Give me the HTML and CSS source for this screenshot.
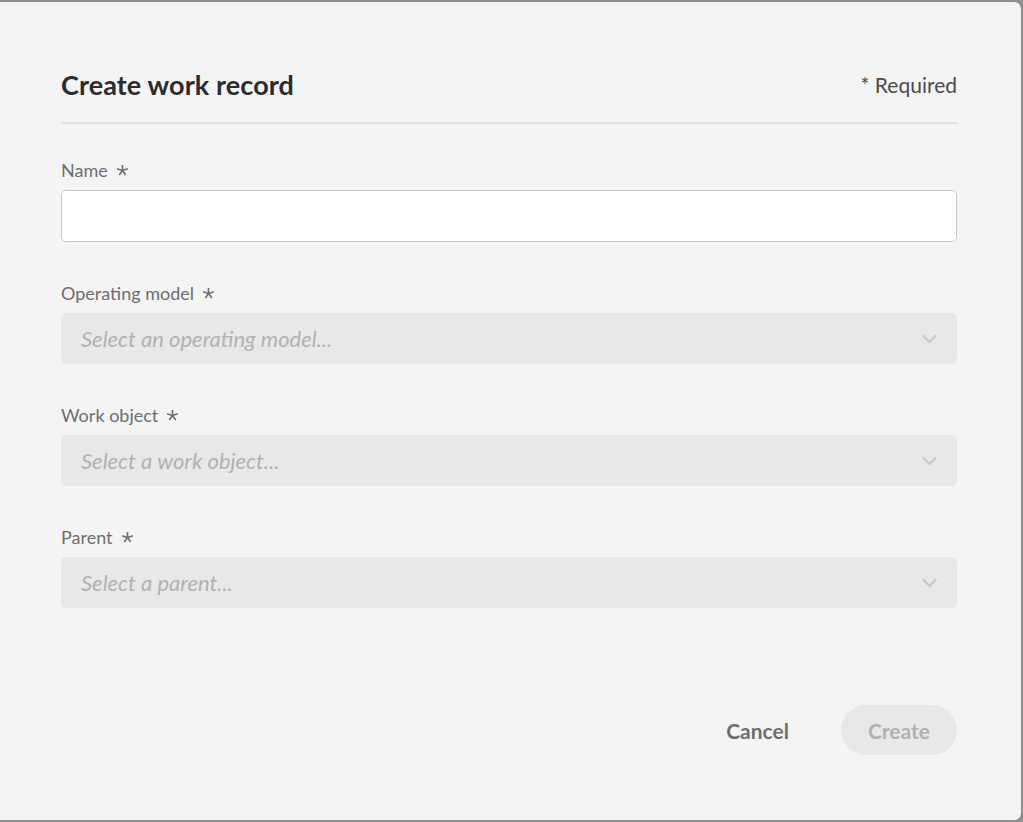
FILE: index.html
```html
<!DOCTYPE html>
<html lang="en">
<head>
<meta charset="utf-8">
<title>Create work record</title>
<link rel="stylesheet" href="styles.css">
</head>
<body>
<div class="dialog">
  <header class="header">
    <h1 class="title">Create work record</h1>
    <span class="required-note">* Required</span>
  </header>
  <div class="divider"></div>
  <form class="form">
    <div class="field">
      <label class="label">Name <svg class="ast" viewBox="0 0 10 10"><g stroke="currentColor" stroke-width="1.5" stroke-linecap="round"><line x1="5" y1="5" x2="5" y2="0.5"/><line x1="5" y1="5" x2="9.3" y2="3.6"/><line x1="5" y1="5" x2="0.7" y2="3.6"/><line x1="5" y1="5" x2="7.6" y2="8.6"/><line x1="5" y1="5" x2="2.4" y2="8.6"/></g></svg></label>
      <div class="textfield"></div>
    </div>
    <div class="field">
      <label class="label">Operating model <svg class="ast" viewBox="0 0 10 10"><g stroke="currentColor" stroke-width="1.5" stroke-linecap="round"><line x1="5" y1="5" x2="5" y2="0.5"/><line x1="5" y1="5" x2="9.3" y2="3.6"/><line x1="5" y1="5" x2="0.7" y2="3.6"/><line x1="5" y1="5" x2="7.6" y2="8.6"/><line x1="5" y1="5" x2="2.4" y2="8.6"/></g></svg></label>
      <div class="picker"><span class="placeholder">Select an operating model...</span><svg class="chev" viewBox="0 0 16 10"><path d="M2 2 L8 8 L14 2" fill="none" stroke="currentColor" stroke-width="2.4" stroke-linecap="round" stroke-linejoin="round"/></svg></div>
    </div>
    <div class="field">
      <label class="label">Work object <svg class="ast" viewBox="0 0 10 10"><g stroke="currentColor" stroke-width="1.5" stroke-linecap="round"><line x1="5" y1="5" x2="5" y2="0.5"/><line x1="5" y1="5" x2="9.3" y2="3.6"/><line x1="5" y1="5" x2="0.7" y2="3.6"/><line x1="5" y1="5" x2="7.6" y2="8.6"/><line x1="5" y1="5" x2="2.4" y2="8.6"/></g></svg></label>
      <div class="picker"><span class="placeholder">Select a work object...</span><svg class="chev" viewBox="0 0 16 10"><path d="M2 2 L8 8 L14 2" fill="none" stroke="currentColor" stroke-width="2.4" stroke-linecap="round" stroke-linejoin="round"/></svg></div>
    </div>
    <div class="field">
      <label class="label">Parent <svg class="ast" viewBox="0 0 10 10"><g stroke="currentColor" stroke-width="1.5" stroke-linecap="round"><line x1="5" y1="5" x2="5" y2="0.5"/><line x1="5" y1="5" x2="9.3" y2="3.6"/><line x1="5" y1="5" x2="0.7" y2="3.6"/><line x1="5" y1="5" x2="7.6" y2="8.6"/><line x1="5" y1="5" x2="2.4" y2="8.6"/></g></svg></label>
      <div class="picker"><span class="placeholder">Select a parent...</span><svg class="chev" viewBox="0 0 16 10"><path d="M2 2 L8 8 L14 2" fill="none" stroke="currentColor" stroke-width="2.4" stroke-linecap="round" stroke-linejoin="round"/></svg></div>
    </div>
  </form>
  <footer class="footer">
    <button class="btn btn-cancel" type="button">Cancel</button>
    <button class="btn btn-create" type="button" disabled>Create</button>
  </footer>
</div>
</body>
</html>
```
FILE: styles.css
```css
html, body {
  margin: 0;
  padding: 0;
  height: 100%;
}
body {
  background: #8f8f8f;
  font-family: Lato, "Open Sans", "Noto Sans", sans-serif;
  padding: 2px 2px 2px 0;
  box-sizing: border-box;
  overflow: hidden;
}
.dialog {
  background: #f4f4f4;
  height: 818px;
  border-radius: 0 7px 7px 0;
  padding: 0 64px 0 61px;
  box-sizing: border-box;
  display: flex;
  flex-direction: column;
}
.header {
  display: flex;
  justify-content: space-between;
  align-items: center;
  padding-top: 62px;
  height: 40px;
}
.title {
  margin: 0;
  font-size: 27px;
  font-weight: 700;
  color: #2c2c2c;
  letter-spacing: 0.1px;
}
.required-note {
  font-size: 21px;
  color: #4b4b4b;
}
.divider {
  height: 2px;
  background: #e1e1e1;
  margin-top: 18px;
}
.form {
  display: flex;
  flex-direction: column;
  gap: 39px;
  margin-top: 34px;
}
.field {
  display: flex;
  flex-direction: column;
  gap: 8px;
}
.label {
  font-size: 18px;
  line-height: 24px;
  color: #6e6e6e;
  display: flex;
  align-items: center;
  gap: 9px;
}
.ast {
  width: 11px;
  height: 11px;
  color: #707070;
}
.textfield {
  height: 52px;
  box-sizing: border-box;
  background: #fff;
  border: 1px solid #c9c9c9;
  border-radius: 5px;
}
.picker {
  height: 51px;
  box-sizing: border-box;
  background: #e8e8e8;
  border-radius: 5px;
  display: flex;
  align-items: center;
  justify-content: space-between;
  padding: 0 19px 0 20px;
}
.placeholder {
  font-size: 22px;
  font-style: italic;
  color: #b2b2b2;
}
.chev {
  width: 17px;
  height: 10px;
  color: #c8c8c8;
}
.footer {
  margin-top: auto;
  margin-bottom: 65px;
  display: flex;
  justify-content: flex-end;
  align-items: center;
  gap: 22px;
}
.btn {
  font-family: inherit;
  font-size: 21px;
  font-weight: 700;
  height: 50px;
  border: none;
  border-radius: 25px;
  padding: 0 27px;
  cursor: pointer;
}
.btn-cancel {
  background: transparent;
  color: #6e6e6e;
  padding: 0 30px;
}
.btn-create {
  background: #e8e8e8;
  color: #b1b1b1;
  min-width: 114px;
}
```
